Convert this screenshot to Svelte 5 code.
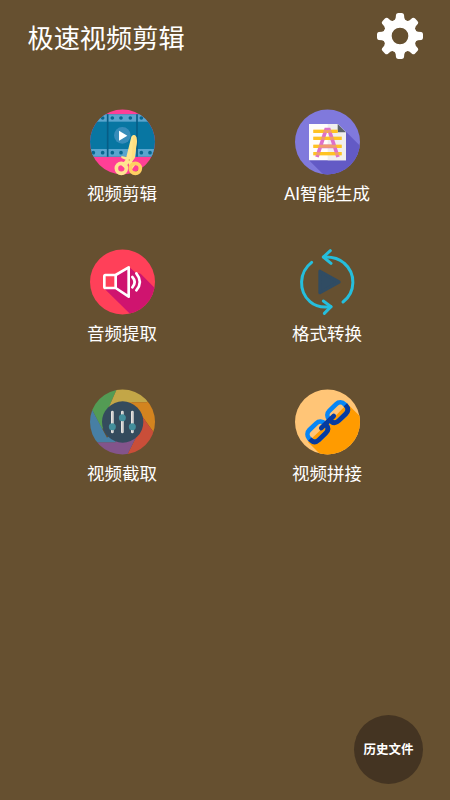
<script>
  const features = ['视频剪辑', 'AI智能生成', '音频提取', '格式转换', '视频截取', '视频拼接'];
  const holes = [34, 62, 91, 117, 145, 178, 204];
  const teeth = [0, 45, 90, 135, 180, 225, 270, 315];
</script>

<main>
  <header>
    <h1>极速视频剪辑</h1>
    <svg class="gear" viewBox="0 0 180 180" aria-label="设置">
      <g fill="#fff">
        {#each teeth as angle}
          <path transform="rotate({angle} 90 90)" d="M66 48Q76 43 77 36L78 26Q79 21 85 21H95Q101 21 102 26L103 36Q104 43 114 48V54H66Z" />
        {/each}
      </g>
      <circle cx="90" cy="90" r="37.500" fill="none" stroke="#fff" stroke-width="25" />
    </svg>
  </header>

  <section class="features">
    {#each features as label, i}
      <div class="feature">
        <svg class="icon" viewBox="0 0 240 240">
          {#if i === 0}
            <clipPath id="film"><circle cx="121.500" cy="120" r="97.500" /></clipPath>
            <g clip-path="url(#film)">
              <rect width="240" height="240" fill="#ff3f96" />
              <rect y="37" width="240" height="127" fill="#0876a2" />
              <rect y="37" width="240" height="22" fill="#5aa5ce" />
              <rect y="141" width="240" height="23" fill="#5aa5ce" />
              {#each holes as x}
                <circle cx={x} cy="48" r="5.500" fill="#08678f" />
                <circle cx={x} cy="152" r="5.500" fill="#08678f" />
              {/each}
              <path d="M77 37V164M165 37V164" stroke="#075d86" stroke-width="5" />
            </g>
            <circle cx="121" cy="100" r="25" fill="#388cba" />
            <path d="M111 86V116L136 101Z" fill="#fff" />
            <path d="M118 162L133 165L148 104Q153 96 160 101L164 118L158 168L150 180L159 190L149 203L139 184L130 200L118 190L131 173L118 168Z" fill="#ffe68e" />
            <path d="M154 99Q162 98 164 107L165 119L158 168L148 177Z" fill="#ffdf80" />
            <g fill="none" stroke-width="11">
              <circle cx="118" cy="199" r="15" stroke="#ffe391" />
              <circle cx="160" cy="199" r="15" stroke="#ffcf62" />
            </g>
            <circle cx="142" cy="174" r="2.500" fill="#d6a956" />
          {:else if i === 1}
            <clipPath id="document"><circle cx="121.500" cy="120" r="97.500" /></clipPath>
            <circle cx="121.500" cy="120" r="97.500" fill="#8079dc" />
            <path clip-path="url(#document)" d="M177 89L240 152V240H132L66 175Z" fill="#635ac5" />
            <path d="M66 66H152L177 91V175H66Z" fill="#fffdfb" />
            <path d="M122 66H152L177 91V175H122Z" fill="#f0eeee" />
            <path d="M152 66L177 91H152Z" fill="#5c626b" />
            <path d="M79 88H152M79 109H164M79 133H164M79 155H164" stroke="#ffc323" stroke-width="10" />
            <path d="M90 165L117 83H126L153 165M102 133H141" fill="none" stroke="#de70c9" stroke-width="11" />
            <path d="M79 88H152M79 109H164M79 133H164M79 155H164" stroke="#ffc323" stroke-width="9" opacity=".55" />
            <path d="M116 78H127V84H116Z" fill="#de70c9" />
          {:else if i === 2}
            <clipPath id="speaker"><circle cx="121.500" cy="120" r="97.500" /></clipPath>
            <circle cx="121.500" cy="120" r="97.500" fill="#ff4059" />
            <path clip-path="url(#speaker)" d="M66 139L104 138L141 74L159 91L176 95L240 160V240H169Z" fill="#cf146f" />
            <path d="M70 99H101V138H70Z" fill="#ff4059" />
            <path d="M101 99L140 76V164L101 138Z" fill="#cf146f" />
            <path d="M101 99V138L140 164V76L101 99H70Q67 99 67 103V134Q67 138 71 138H101" fill="none" stroke="#fff" stroke-width="8" stroke-linejoin="round" />
            <path d="M151 105Q165 120 151 136M163 94Q184 120 163 145" fill="none" stroke="#fff" stroke-width="8" stroke-linecap="round" />
          {:else if i === 3}
            <g fill="none" stroke="#25bedc" stroke-width="9" stroke-linecap="round" stroke-linejoin="round">
              <path d="M74 61C35 91 34 148 69 179Q92 200 132 194" />
              <path d="M109 177L132 194L112 214" />
              <path d="M168 180C207 150 207 94 171 63Q149 43 109 45" />
              <path d="M130 26L109 45L132 64" />
            </g>
            <path d="M99 88V152L156 120Z" fill="#304c63" stroke="#304c63" stroke-width="10" stroke-linejoin="round" />
          {:else if i === 4}
            <clipPath id="shutter"><circle cx="121.500" cy="120" r="97.500" /></clipPath>
            <g clip-path="url(#shutter)">
              <path d="M106 18L70 100L122 120L60 140L31 85L0 60V0Z" fill="#539b54" />
              <path d="M106 18L70 100L122 120L150 61H194L240 0Z" fill="#c3a647" />
              <path d="M194 61H130L122 120L175 95L218 155H240V0Z" fill="#d3841f" />
              <path d="M218 155L175 95L122 120L175 140L135 220V240H240V155Z" fill="#c94e39" />
              <path d="M135 220L175 140L122 120L100 181H44L0 200V240H135Z" fill="#83548b" />
              <path d="M44 181H100L122 120L75 167L31 85L0 60V200Z" fill="#477fa4" />
              <circle cx="122" cy="120" r="62" fill="#344b5d" />
            </g>
            <path d="M91 90V150M121 90V150M151 90V150" stroke="#e5e2df" stroke-width="8" stroke-linecap="round" />
            <path d="M93 89V151M123 89V151M153 89V151" stroke="#bcbdbd" stroke-width="3" />
            <g fill="#438f9c">
              <circle cx="91" cy="134" r="10.500" /><circle cx="121" cy="107" r="10.500" /><circle cx="151" cy="134" r="10.500" />
            </g>
          {:else}
            <clipPath id="chain"><circle cx="121.500" cy="120" r="97.500" /></clipPath>
            <circle cx="121.500" cy="120" r="97.500" fill="#ffc577" />
            <path clip-path="url(#chain)" d="M63 180L145 102L181 65L240 124V240H123Z" fill="#ff9b00" />
            <g transform="translate(121.500 120) rotate(-44)" fill="none" stroke-width="14">
              <rect x="-74" y="-20.500" width="65" height="41" rx="18" stroke="#0786f6" />
              <path d="M-74 0V2.500Q-74 20.500-56 20.500H-27Q-9 20.500-9 2.500V0" stroke="#073b9f" />
              <rect x="9" y="-20.500" width="65" height="41" rx="18" stroke="#0786f6" />
              <path d="M74 0V2.500Q74 20.500 56 20.500H27Q9 20.500 9 2.500V0" stroke="#073b9f" />
              <path d="M-26 0H26" stroke="#073b9f" stroke-linecap="round" />
            </g>
          {/if}
        </svg>
        <span>{label}</span>
      </div>
    {/each}
  </section>

  <footer><button>历史文件</button></footer>
</main>

<style>
  :global(body) { margin: 0; background: #665030; }
  main {
    height: 800px;
    display: flex;
    flex-direction: column;
    background: #665030;
    color: #fff;
    font-family: Roboto, "Noto Sans CJK SC", sans-serif;
  }
  header {
    height: 66px;
    padding: 6px 20px 0 27.5px;
    box-sizing: border-box;
    display: flex;
    justify-content: space-between;
  }
  h1 { margin: 14px 0 0; font-size: 26.2px; line-height: 38px; font-weight: 400; }
  .gear { width: 60px; height: 60px; }
  .features {
    display: grid;
    grid-template-columns: 206px 204px;
    grid-auto-rows: 140px;
    padding: 36px 0 0 19px;
  }
  .feature { display: flex; flex-direction: column; align-items: center; }
  .icon { width: 80px; height: 80px; }
  span { font-size: 17.5px; line-height: 24px; white-space: nowrap; }
  footer { margin-top: auto; padding: 0 27px 16px 0; display: flex; justify-content: flex-end; }
  button {
    width: 69px;
    height: 69px;
    padding: 0 0 2px;
    border: 0;
    border-radius: 50%;
    background: #443422;
    color: #fff;
    font: 700 12.5px "Noto Sans CJK SC", sans-serif;
    white-space: nowrap;
  }
</style>
